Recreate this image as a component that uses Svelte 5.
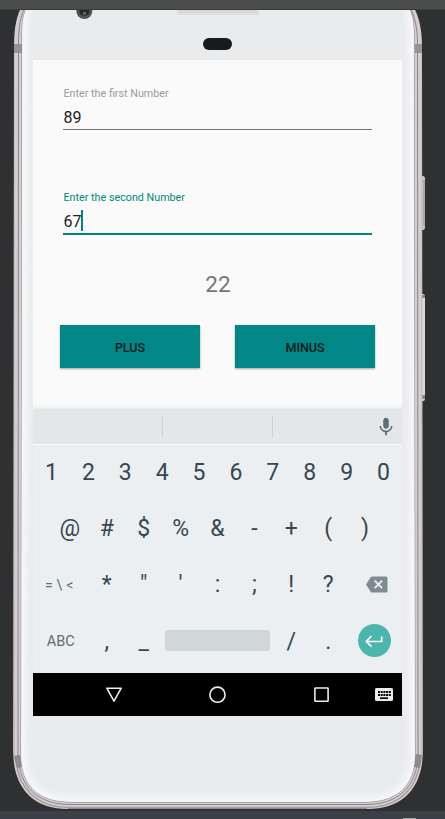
<script>
  const digits = ['1', '2', '3', '4', '5', '6', '7', '8', '9', '0'];
  const symbols = ['@', '#', '$', '%', '&', '-', '+', '(', ')'];
  const marks = ['*', '"', "'", ':', ';', '!', '?'];
</script>

<div class="stage">
  <svg class="device" width="445" height="819" viewBox="0 0 445 819" aria-hidden="true">
    <defs>
      <linearGradient id="side" x1="0" x2="1" y1="0" y2="0">
        <stop offset="0" stop-color="#b5aeb1" />
        <stop offset="0.006" stop-color="#d5ced1" />
        <stop offset="0.994" stop-color="#d5ced1" />
        <stop offset="1" stop-color="#b5aeb1" />
      </linearGradient>
      <filter id="soft" x="-5%" y="-5%" width="110%" height="110%"><feGaussianBlur stdDeviation="3" /></filter>
      <clipPath id="face">
        <path d="M22 35C22 22 23 15 28 4H407C413 15 414 22 414 35L415 755C415 786 397 802 365 802H71C39 802 21 786 21 755Z" />
      </clipPath>
    </defs>
    <rect width="445" height="819" fill="#2e3031" />
    <path d="M420 176h3q2 0 2 3v48q0 3-2 3h-3z" fill="#c9c5c5" />
    <path d="M424 180v46" stroke="#8c8b89" />
    <path d="M420 294h3q2 0 2 3v101q0 3-2 3h-3z" fill="#dedbd7" />
    <path d="M422 295h3v3h-3zM422 395h3v4h-3z" fill="#878485" />
    <path d="M14 45C14 27 17 14 23 4H412C418 14 422 27 422 45L423 750C423 788 403 809 367 809H68C33 809 13 788 13 750Z" fill="url(#side)" />
    <path d="M68 808H367" stroke="#8f858a" stroke-width="2" />
    <path d="M15.500 758C18 788 36 807 68 807.500H367C400 807 418 788 420.500 758" fill="none" stroke="#a69da1" stroke-width="1.500" />
    <path d="M18.500 45C18.500 27 20 18 26 4M417.500 45C417.500 27 415 18 409 4M18.500 45L18 755C19 787 38 804.500 70 804.500H366C398 804.500 417 787 418 755L417.500 45" fill="none" stroke="#8c8487" stroke-width="1" />
    <path d="M14 44h8v9h-8zM415 44h7v9h-7z" fill="#979394" />
    <path d="M14 756l6-1 3 12-6 1zM422 755l-6-1-3 13 7 1z" fill="#918a8d" />
    <path d="M22 35C22 22 23 15 28 4H407C413 15 414 22 414 35L415 755C415 786 397 802 365 802H71C39 802 21 786 21 755Z" fill="#eaebed" stroke="#8b8387" />
    <g clip-path="url(#face)">
      <path d="M22 35C22 22 23 15 28 -10H407C413 15 414 22 414 35L415 755C415 786 397 802 365 802H71C39 802 21 786 21 755Z" fill="none" stroke="#f7f8fb" stroke-width="10" filter="url(#soft)" />
    </g>
    <circle cx="84.300" cy="11" r="8" fill="#515456" />
    <circle cx="84.300" cy="11" r="5" fill="#252a2d" />
    <path d="M83 12h3v3h-3z" fill="#66644a" />
    <path d="M177 8H259V13q0 2-2 2H179q-2 0-2-2Z" fill="#dcdce1" />
    <path d="M180 11.500H256" stroke="#d0d0d7" stroke-width="2" stroke-dasharray="1 1" />
    <rect x="203" y="38" width="29" height="12" rx="6" fill="#171b20" />
    <rect width="445" height="9" fill="#4b4d4c" />
    <path d="M0 9.500H445" stroke="#393b3b" />
    <rect y="811" width="445" height="8" fill="#3b4044" />
    <rect x="403" y="818" width="13" height="1" fill="#a3a5a7" />
  </svg>

  <main class="screen">
    <section class="form">
      <label class="field">
        <span class="label">Enter the first Number</span>
        <span class="value">89</span>
      </label>
      <label class="field active">
        <span class="label">Enter the second Number</span>
        <span class="value">67<i class="caret"></i></span>
      </label>
      <output class="result">22</output>
      <div class="buttons">
        <button>PLUS</button>
        <button>MINUS</button>
      </div>
    </section>

    <section class="keyboard">
      <div class="suggestions">
        <span></span><span></span>
        <div class="mic">
          <svg width="22" height="22" viewBox="0 0 24 24" fill="#5f6e76"><path d="M12 14c1.660 0 3-1.340 3-3V5c0-1.660-1.340-3-3-3S9 3.340 9 5v6c0 1.660 1.340 3 3 3zM17.300 11c0 3-2.540 5.100-5.300 5.100S6.700 14 6.700 11H5c0 3.410 2.720 6.230 6 6.720V21h2v-3.280c3.280-.48 6-3.300 6-6.720z" /></svg>
        </div>
      </div>
      <div class="keys">
        <div class="row">{#each digits as k}<span class="key">{k}</span>{/each}</div>
        <div class="row">{#each symbols as k}<span class="key">{k}</span>{/each}</div>
        <div class="row">
          <span class="key wide more">= \ &lt;</span>
          {#each marks as k}<span class="key">{k}</span>{/each}
          <span class="key wide del">
            <svg width="22" height="17" viewBox="0 0 22 17"><path d="M6 .5H20Q21.500.5 21.500 2V15Q21.500 16.500 20 16.500H6Q5 16.500 4.500 15.500L0 8.500 4.500 1.500Q5 .5 6 .5Z" fill="#808b90" /><path d="M8.700 4.700l7.400 7.400M16.100 4.700l-7.400 7.400" stroke="#eceff1" stroke-width="1.900" /></svg>
          </span>
        </div>
        <div class="row">
          <span class="key wide abc">ABC</span>
          <span class="key">,</span>
          <span class="key">_</span>
          <span class="spacebar"><i></i></span>
          <span class="key">/</span>
          <span class="key">.</span>
          <span class="key wide">
            <span class="enter"><svg width="18" height="12" viewBox="0 0 18 12" fill="none" stroke="#fff" stroke-width="1.700"><path d="M16.700 1.500V6.500H1.500M6.500 1L1.300 6.500 6.500 11.500" /></svg></span>
          </span>
        </div>
      </div>
    </section>

    <nav>
      <svg width="369" height="43" viewBox="0 0 369 43" fill="none" stroke="#ececec" stroke-width="1.600">
        <path d="M73.800 15.200H88.200L81 28.100Z" stroke-linejoin="round" />
        <circle cx="184.500" cy="21.700" r="7.600" />
        <rect x="281.900" y="15" width="13.200" height="13.200" rx=".5" />
        <rect x="342" y="15" width="18" height="13" rx="1.500" fill="#ececec" stroke="none" />
        <path d="M345 18.900H358M345 21.900H358" stroke="#000" stroke-width="2" stroke-dasharray="2 .7" />
        <path d="M347 25.200H355" stroke="#000" stroke-width="1.700" />
      </svg>
    </nav>
  </main>
</div>

<style>
  :global(body) { margin: 0; background: #2e3031; }
  .stage {
    position: relative;
    box-sizing: border-box;
    width: 445px;
    height: 819px;
    padding: 60px 43px 0 33px;
    overflow: hidden;
    font-family: Roboto, "Liberation Sans", sans-serif;
  }
  .device { position: absolute; inset: 0; }
  .screen {
    position: relative;
    display: flex;
    flex-direction: column;
    width: 369px;
    height: 656px;
    background: #fafafa;
  }
  .form {
    box-sizing: border-box;
    height: 349px;
    padding: 27px 30px 0;
    background: linear-gradient(#fafafa 345px, #f3f4f4 346px, #eceded 349px);
  }
  .field { display: flex; flex-direction: column; height: 104px; color: #9b9b9b; }
  .label { height: 14px; padding-left: .5px; font-size: 10.750px; line-height: 14px; white-space: nowrap; }
  .value {
    display: flex;
    align-items: center;
    box-sizing: border-box;
    width: 309px;
    height: 29px;
    padding: 5px 0 0 .5px;
    border-bottom: 1px solid #757575;
    color: #212121;
    font-size: 16px;
  }
  .active { color: #00897b; }
  .active .value { height: 30px; border-bottom: 2px solid #00897b; }
  .caret { width: 2px; height: 21px; margin-top: -3px; background: #00897b; }
  .result {
    display: block;
    box-sizing: border-box;
    height: 56px;
    margin-top: -26px;
    padding: 2px 0 0 1px;
    text-align: center;
    font-size: 22.500px;
    line-height: 26px;
    color: #757575;
  }
  .buttons { display: flex; justify-content: space-between; margin: 0 -3px; }
  button {
    width: 140px;
    height: 43px;
    padding: 1px 0 0;
    border: 0;
    background: #018786;
    color: #071b1b;
    font: 500 12.500px Roboto, "Liberation Sans", sans-serif;
    box-shadow: 0 1px 2px rgba(0, 0, 0, .35);
  }
  .keyboard { height: 264px; background: #eceff1; }
  .suggestions {
    display: flex;
    align-items: center;
    height: 35px;
    background: #e3e7e9;
    border-bottom: 1px solid #f7f9fa;
  }
  .suggestions span { box-sizing: border-box; height: 22px; width: 110px; border-right: 1px solid #cdd2d4; }
  .suggestions span:first-child { width: 130px; }
  .mic { display: flex; flex: 1; justify-content: flex-end; padding-right: 5px; }
  .keys { display: flex; flex-direction: column; margin-top: -1px; }
  .row { display: flex; justify-content: center; height: 56.300px; }
  .key {
    display: flex;
    align-items: center;
    justify-content: center;
    width: 36.900px;
    font-size: 23px;
    color: #37474f;
  }
  .wide { width: 55.350px; }
  .del { box-sizing: border-box; padding-left: 5px; }
  .more { box-sizing: border-box; padding-right: 3px; font-size: 14px; word-spacing: .5px; color: #5f6d74; }
  .abc { font-size: 14.500px; color: #5f6d74; }
  .spacebar { display: flex; align-items: center; justify-content: center; width: 110.700px; }
  .spacebar i { width: 105px; height: 21px; margin-top: -2px; border-radius: 3px; background: #d0d5d8; }
  .enter {
    display: flex;
    align-items: center;
    justify-content: center;
    width: 33px;
    height: 33px;
    margin-top: -1px;
    border-radius: 50%;
    background: #4db6ac;
  }
  nav { display: flex; height: 43px; background: #000; }
</style>
